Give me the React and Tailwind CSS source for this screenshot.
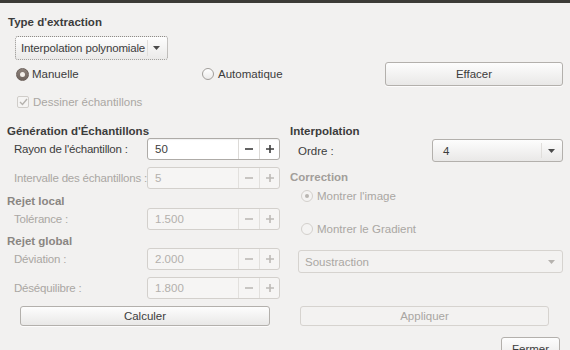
import React from 'react';

const dark = 'text-[#3c3c3c]';
const dim = 'text-[#aaa7a3]';

function Arrow({ disabled }) {
  return (
    <svg width="7" height="4" viewBox="0 0 7 4" className="shrink-0">
      <path d="M0 0 L7 0 L3.5 4 Z" fill={disabled ? '#b5b2ae' : '#4a4a4a'} />
    </svg>
  );
}

function Minus({ disabled }) {
  return (
    <svg width="10" height="10" viewBox="0 0 10 10">
      <path d="M1 5 H9" stroke={disabled ? '#bdbab6' : '#3c3c3c'} strokeWidth="1.6" />
    </svg>
  );
}

function Plus({ disabled }) {
  return (
    <svg width="10" height="10" viewBox="0 0 10 10">
      <path d="M1 5 H9 M5 1 V9" stroke={disabled ? '#bdbab6' : '#3c3c3c'} strokeWidth="1.6" />
    </svg>
  );
}

function Spin({ value, disabled }) {
  return (
    <div
      className={`flex h-[22px] w-[133px] shrink-0 rounded-[3px] border ${
        disabled ? 'border-[#d3d0cc] bg-[#f6f5f4]' : 'border-[#aeaba7] bg-white shadow-[inset_0_1px_1px_rgba(0,0,0,0.06)]'
      }`}
    >
      <div className={`flex flex-1 items-center pl-[7px] ${disabled ? 'text-[#b3b0ac]' : dark}`}>{value}</div>
      <div className={`flex w-[21px] items-center justify-center border-l ${disabled ? 'border-[#e2e0dd]' : 'border-[#dcdad7]'}`}>
        <Minus disabled={disabled} />
      </div>
      <div className={`flex w-[20px] items-center justify-center border-l ${disabled ? 'border-[#e2e0dd]' : 'border-[#dcdad7]'}`}>
        <Plus disabled={disabled} />
      </div>
    </div>
  );
}

function Row({ label, value, disabled, className = '' }) {
  return (
    <div className={`flex h-[22px] items-center pl-[7px] ${className}`}>
      <div className={`w-[133px] shrink-0 whitespace-nowrap tracking-[-0.2px] ${disabled ? dim : dark}`}>{label}</div>
      <Spin value={value} disabled={disabled} />
    </div>
  );
}

function Button({ children, disabled, className = '' }) {
  return (
    <div
      className={`flex items-center justify-center rounded-[3px] border ${
        disabled
          ? 'border-[#d6d3cf] bg-[#f3f2f1] text-[#a9a6a2]'
          : 'border-[#b3b0ac] bg-linear-to-b from-[#fdfdfd] to-[#e9e8e7] text-[#3c3c3c] shadow-[0_1px_0_rgba(255,255,255,0.8)]'
      } ${className}`}
    >
      {children}
    </div>
  );
}

function Radio({ checked, disabled }) {
  if (disabled) {
    return (
      <div className="flex h-[12px] w-[12px] items-center justify-center rounded-full border border-[#d3d0cc] bg-[#f4f3f2]">
        {checked && <div className="h-[4px] w-[4px] rounded-full bg-[#b9b6b2]" />}
      </div>
    );
  }
  if (checked) {
    return (
      <div className="flex h-[13px] w-[13px] items-center justify-center rounded-full border border-[#6b605a] bg-linear-to-b from-[#8d827b] to-[#6f645e]">
        <div className="h-[5px] w-[5px] rounded-full bg-[#f3efea]" />
      </div>
    );
  }
  return <div className="h-[12px] w-[12px] rounded-full border border-[#a19e9a] bg-linear-to-b from-white to-[#ecebea]" />;
}

export default function App() {
  return (
    <div className="h-[350px] w-[570px] overflow-hidden whitespace-nowrap bg-[#f2f1f0] font-['Liberation_Sans',Arial,sans-serif] text-[11.5px] leading-[14px] text-[#3c3c3c]">
      <div className="h-[3px] bg-[#3c3b37]" />

      {/* Type d'extraction */}
      <div className="ml-[8px] mt-[11px] h-[16px] font-bold leading-[16px]">Type d'extraction</div>
      <div className="ml-[15px] mt-[6px] flex h-[24px] w-[153px] items-center rounded-[3px] border border-dotted border-[#8f8c88] bg-linear-to-b from-[#fdfdfd] to-[#ebeae9] pl-[5px] pr-[7px]">
        <span className="flex-1 tracking-[-0.15px]">Interpolation polynomiale</span>
        <div className="mr-[5px] h-[16px] border-l border-[#e0dedb]" />
        <Arrow />
      </div>

      <div className="mt-[2px] flex h-[24px] items-center">
        <div className="ml-[16px] flex w-[186px] items-center gap-[3px]">
          <Radio checked />
          <span>Manuelle</span>
        </div>
        <div className="flex w-[183px] items-center gap-[4px]">
          <Radio />
          <span>Automatique</span>
        </div>
        <Button className="h-[24px] w-[178px]">Effacer</Button>
      </div>

      <div className="ml-[17px] mt-[8px] flex h-[16px] items-center gap-[4px]">
        <div className="flex h-[12px] w-[12px] items-center justify-center rounded-[2px] border border-[#d0cdc9] bg-[#f5f4f3]">
          <svg width="9" height="8" viewBox="0 0 9 8">
            <path d="M1 4 L3.5 6.5 L8 1" stroke="#b5b2ae" strokeWidth="1.4" fill="none" />
          </svg>
        </div>
        <span className={dim}>Dessiner échantillons</span>
      </div>

      {/* two columns */}
      <div className="mt-[15px] flex">
        <div className="w-[290px] pl-[7px]">
          <div className="h-[13px] font-bold leading-[13px]">Génération d'Échantillons</div>
          <Row label="Rayon de l'échantillon :" value="50" />
          <Row label="Intervalle des échantillons :" value="5" disabled className="mt-[7px]" />
          <div className="mt-[5px] h-[14px] font-bold text-[#8a8682]">Rejet local</div>
          <Row label="Tolérance :" value="1.500" disabled />
          <div className="mt-[4px] h-[14px] font-bold text-[#8a8682]">Rejet global</div>
          <Row label="Déviation :" value="2.000" disabled />
          <Row label="Déséquilibre :" value="1.800" disabled className="mt-[7px]" />
          <Button className="ml-[13px] mt-[7px] h-[20px] w-[250px]">Calculer</Button>
        </div>

        <div className="w-[280px]">
          <div className="h-[13px] font-bold leading-[13px]">Interpolation</div>
          <div className="mt-[1px] flex h-[23px] items-center pl-[8px]">
            <div className="w-[134px]">Ordre :</div>
            <div className="flex h-[23px] w-[131px] items-center rounded-[3px] border border-[#b3b0ac] bg-linear-to-b from-[#fdfdfd] to-[#e9e8e7] pl-[10px] pr-[7px]">
              <span className="flex-1">4</span>
              <div className="mr-[6px] h-[15px] border-l border-[#e0dedb]" />
              <Arrow />
            </div>
          </div>
          <div className="mt-[8px] h-[14px] font-bold text-[#a29e9a]">Correction</div>
          <div className="ml-[11px] mt-[5px] flex h-[14px] items-center gap-[4px]">
            <Radio checked disabled />
            <span className={dim}>Montrer l'image</span>
          </div>
          <div className="ml-[11px] mt-[19px] flex h-[14px] items-center gap-[4px]">
            <Radio disabled />
            <span className={dim}>Montrer le Gradient</span>
          </div>
          <div className="ml-[8px] mt-[14px] flex h-[23px] w-[265px] items-center rounded-[3px] border border-[#d6d3cf] bg-[#f3f2f1] pl-[6px] pr-[7px]">
            <span className={`flex-1 ${dim}`}>Soustraction</span>
            <Arrow disabled />
          </div>
          <Button disabled className="ml-[10px] mt-[33px] h-[20px] w-[249px]">Appliquer</Button>
        </div>
      </div>

      <Button className="ml-[501px] mt-[11px] h-[24px] w-[59px]">Fermer</Button>
    </div>
  );
}
